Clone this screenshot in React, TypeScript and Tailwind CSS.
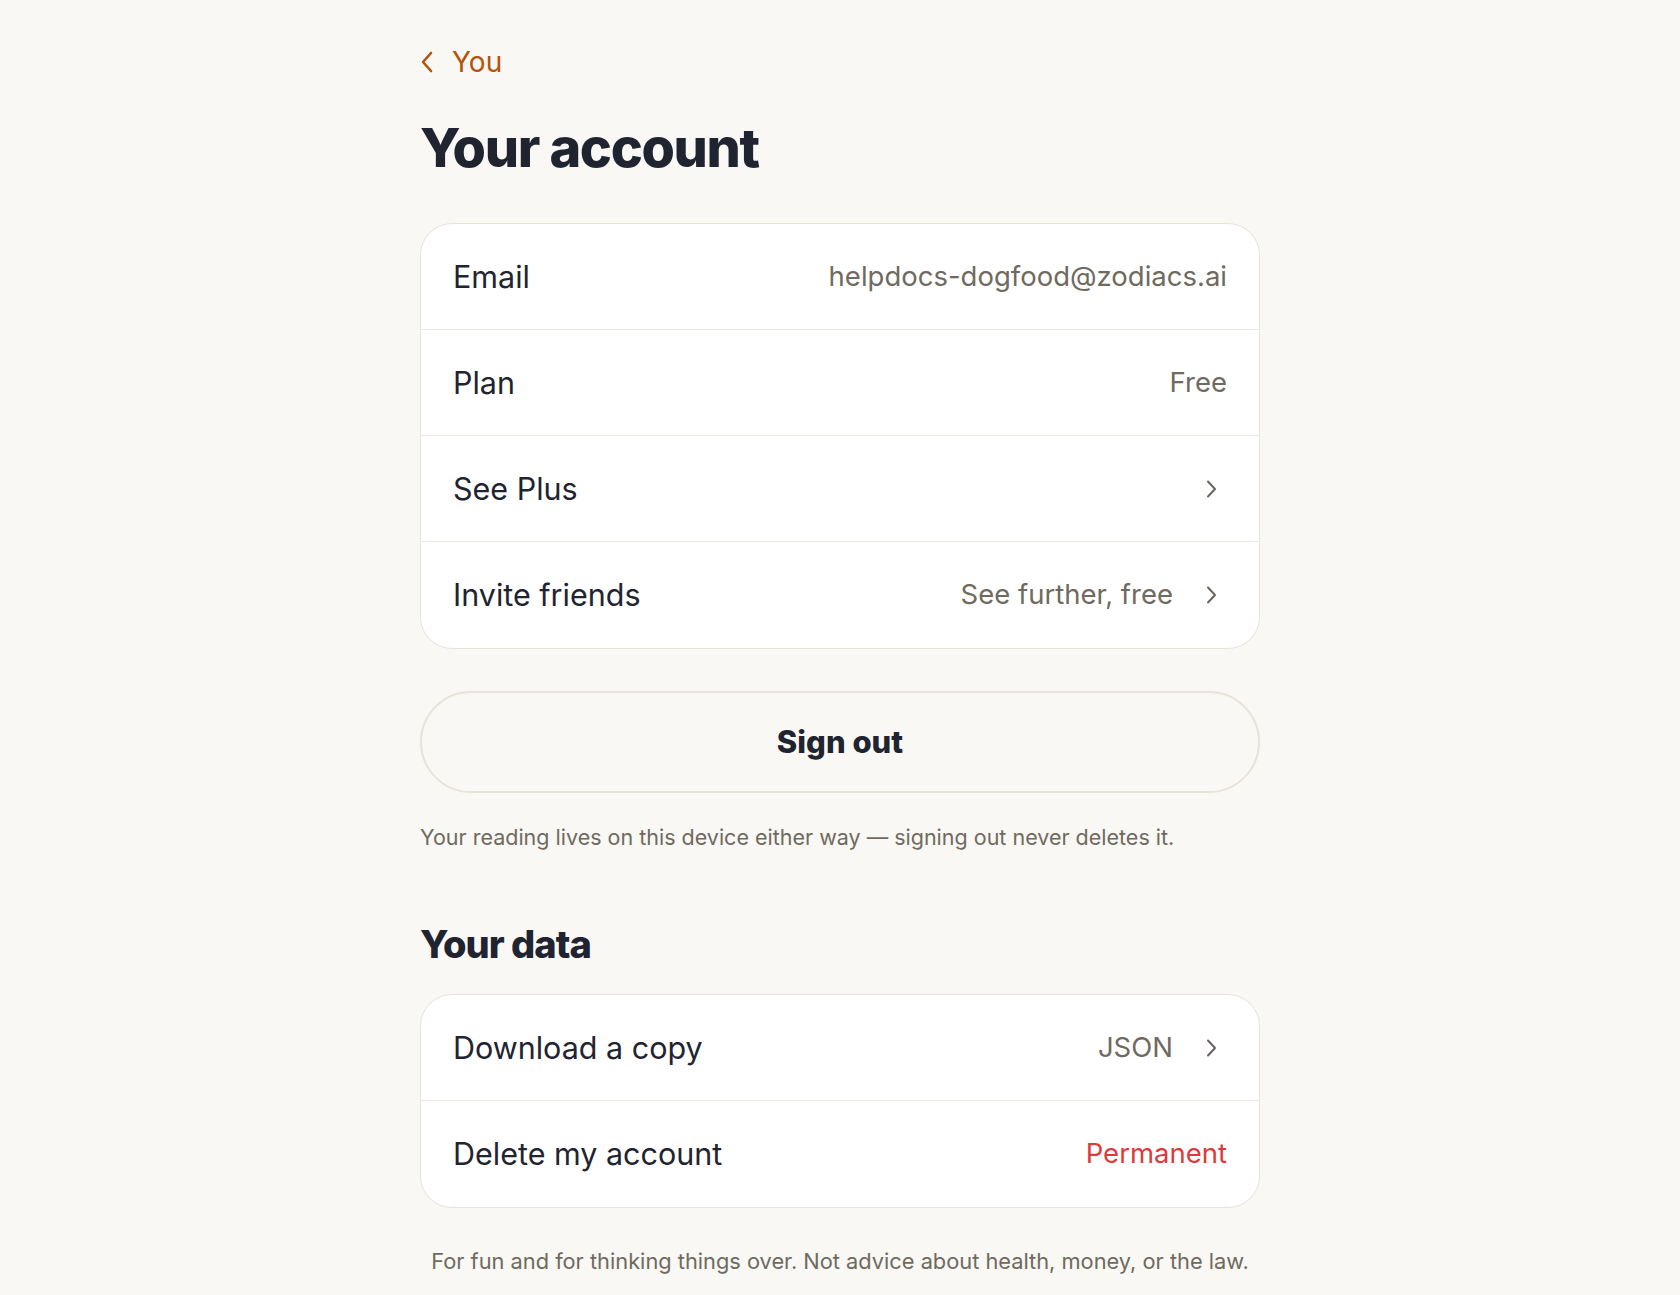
import React from 'react'

type Row = {
  label: string
  value?: string
  danger?: boolean
  arrow?: boolean
}

const accountRows: Row[] = [
  { label: 'Email', value: 'helpdocs-dogfood@zodiacs.ai' },
  { label: 'Plan', value: 'Free' },
  { label: 'See Plus', arrow: true },
  { label: 'Invite friends', value: 'See further, free', arrow: true },
]

const dataRows: Row[] = [
  { label: 'Download a copy', value: 'JSON', arrow: true },
  { label: 'Delete my account', value: 'Permanent', danger: true },
]

function ChevronRight() {
  return (
    <svg width="22" height="24" viewBox="0 0 22 24" fill="none" className="shrink-0">
      <path d="M3 4.5l7 7.5-7 7.5" stroke="#6b665c" strokeWidth="2" strokeLinecap="round" strokeLinejoin="round" />
    </svg>
  )
}

function SettingsCard({ rows }: { rows: Row[] }) {
  return (
    <div className="bg-white border-[1.5px] border-[#e7e3db] rounded-[32px] overflow-hidden">
      {rows.map((row, i) => (
        <div
          key={row.label}
          className={`h-[106px] px-[32px] flex items-center justify-between ${
            i < rows.length - 1 ? 'border-b-[1.5px] border-[#ece8e0]' : ''
          }`}
        >
          <span className="text-[30.5px] text-[#1f2430]">{row.label}</span>
          <div className="flex items-center gap-[32px]">
            {row.value && (
              <span className={`text-[27.5px] ${row.danger ? 'text-[#dc3b3b]' : 'text-[#6f6a60]'}`}>
                {row.value}
              </span>
            )}
            {row.arrow && <ChevronRight />}
          </div>
        </div>
      ))}
    </div>
  )
}

export default function App() {
  return (
    <div className="min-h-screen bg-[#f9f8f4] font-['Inter',sans-serif]">
      <div className="w-[840px] mx-auto pt-[42px] pb-[30px]">
        {/* Back link */}
        <a href="#" className="flex items-center gap-[18px] h-[40px] text-[28px] text-[#b45309]">
          <svg width="14" height="22" viewBox="0 0 14 22" fill="none">
            <path d="M11 2L3 11l8 9" stroke="#b45309" strokeWidth="2.6" strokeLinecap="round" strokeLinejoin="round" />
          </svg>
          <span>You</span>
        </a>

        <h1 className="mt-[38px] text-[54px] leading-[56px] font-extrabold tracking-tight text-[#1f2430]">
          Your account
        </h1>

        <div className="mt-[47px]">
          <SettingsCard rows={accountRows} />
        </div>

        <button className="mt-[42px] w-full h-[102px] rounded-full border-2 border-[#e7e3db] bg-transparent text-[31px] font-extrabold text-[#1f2430]">
          Sign out
        </button>

        <p className="mt-[28px] text-[21.5px] leading-[32px] text-[#6f6a60]">
          Your reading lives on this device either way — signing out never deletes it.
        </p>

        <h2 className="mt-[69px] text-[38px] leading-[44px] font-extrabold tracking-tight text-[#1f2430]">
          Your data
        </h2>

        <div className="mt-[28px]">
          <SettingsCard rows={dataRows} />
        </div>

        <p className="mt-[37px] text-center text-[21.8px] leading-[32px] text-[#6f6a60]">
          For fun and for thinking things over. Not advice about health, money, or the law.
        </p>
      </div>
    </div>
  )
}
